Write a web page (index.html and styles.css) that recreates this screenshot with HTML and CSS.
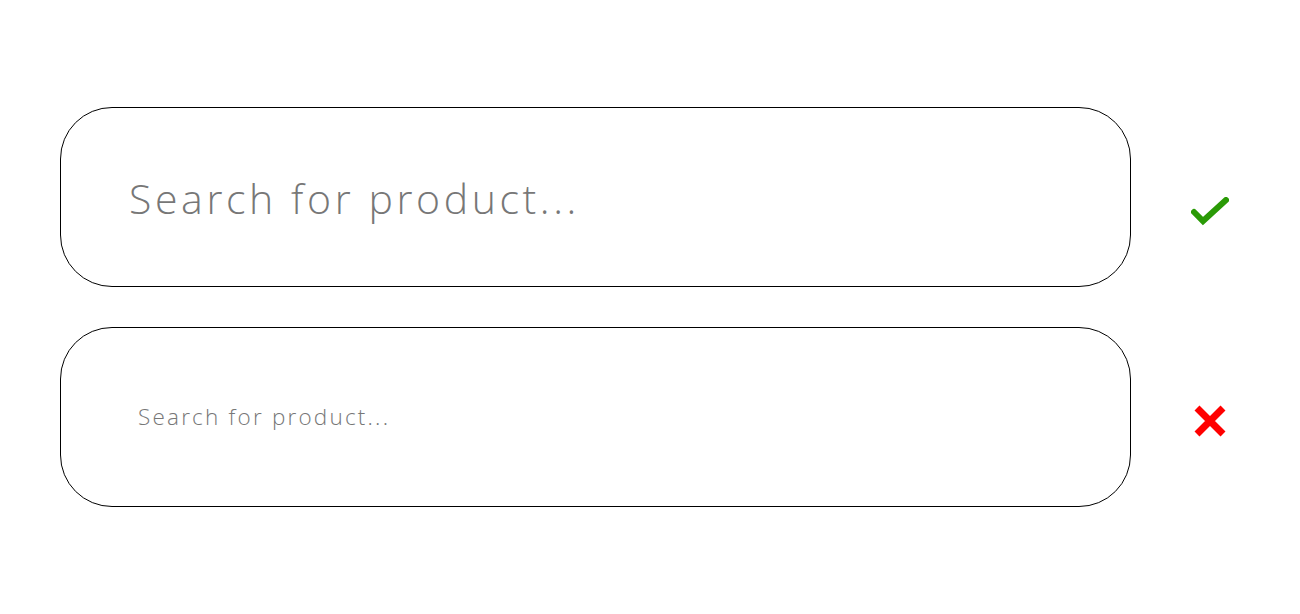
FILE: index.html
```html
<!DOCTYPE html>
<html lang="en">
<head>
<meta charset="utf-8">
<title>Search inputs</title>
<link rel="stylesheet" href="styles.css">
</head>
<body>
<main class="page">
  <div class="row">
    <input class="search search-good" type="text" placeholder="Search for product...">
    <span class="icon icon-check">
      <svg width="38" height="30" viewBox="0 0 38 30"><polyline points="3,15 12,24 35,3" fill="none" stroke="#2a9a06" stroke-width="6" stroke-linejoin="miter" stroke-linecap="round"/></svg>
    </span>
  </div>
  <div class="row">
    <input class="search search-bad" type="text" placeholder="Search for product...">
    <span class="icon icon-cross">
      <svg width="32" height="32" viewBox="0 0 32 32"><path d="M3 3 L29 29 M29 3 L3 29" fill="none" stroke="#ff0000" stroke-width="7" stroke-linecap="butt"/></svg>
    </span>
  </div>
</main>
</body>
</html>
```
FILE: styles.css
```css
html, body {
  margin: 0;
  padding: 0;
  background: #ffffff;
}
.page {
  display: flex;
  flex-direction: column;
  gap: 40px;
  padding: 107px 0 0 60px;
}
.row {
  display: flex;
  align-items: center;
}
.search {
  box-sizing: border-box;
  width: 1071px;
  height: 180px;
  border: 1px solid #000000;
  border-radius: 52px;
  background: #ffffff;
  font-family: "Open Sans", "DejaVu Sans", sans-serif;
  font-weight: 300;
  color: #777777;
  outline: none;
  margin: 0;
}
.search::placeholder {
  color: #777777;
  opacity: 1;
}
.search-good {
  padding: 2px 0 0 68px;
  font-size: 41px;
  letter-spacing: 3.6px;
}
.search-bad {
  padding: 0 0 2px 77px;
  font-size: 22.5px;
  letter-spacing: 2.2px;
}
.icon {
  display: flex;
  margin-left: 60px;
}
.icon-check {
  margin-top: 30px;
}
.icon-cross {
  margin-left: 63px;
  margin-top: 8px;
}
```
